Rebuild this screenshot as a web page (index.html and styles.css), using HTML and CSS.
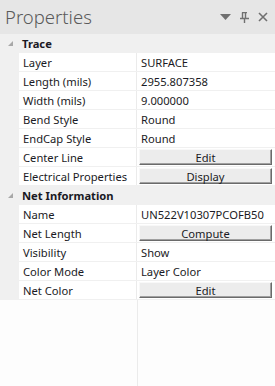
FILE: index.html
```html
<!DOCTYPE html>
<html lang="en">
<head>
    <meta charset="UTF-8">
    <meta name="viewport" content="width=device-width, initial-scale=1.0">
    <title>Properties</title>
    <link rel="stylesheet" href="styles.css">
</head>
<body>
    <div class="panel">
        <div class="titlebar">
            <span class="title">Properties</span>
            <div class="tools">
                <svg width="11" height="6" viewBox="0 0 11 6"><path d="M0 0 H11 L5.5 6 Z" fill="#707070"/></svg>
                <svg width="9" height="11" viewBox="0 0 9 11"><path d="M2 0.5 H7 M2.5 0.5 V6 M5.5 0.5 V6 M0 6.5 H9 M4.5 6.5 V11" stroke="#707070" stroke-width="1.4" fill="none"/></svg>
                <svg width="10" height="10" viewBox="0 0 10 10"><path d="M1 1 L9 9 M9 1 L1 9" stroke="#707070" stroke-width="1.6" fill="none"/></svg>
            </div>
        </div>

        <div class="grid">
            <div class="category"><span class="arrow"></span>Trace</div>
            <div class="row"><span class="name">Layer</span><span class="value">SURFACE</span></div>
            <div class="row"><span class="name">Length (mils)</span><span class="value">2955.807358</span></div>
            <div class="row"><span class="name">Width (mils)</span><span class="value">9.000000</span></div>
            <div class="row"><span class="name">Bend Style</span><span class="value">Round</span></div>
            <div class="row"><span class="name">EndCap Style</span><span class="value">Round</span></div>
            <div class="row"><span class="name">Center Line</span><span class="value"><button>Edit</button></span></div>
            <div class="row"><span class="name">Electrical Properties</span><span class="value"><button>Display</button></span></div>

            <div class="category"><span class="arrow"></span>Net Information</div>
            <div class="row"><span class="name">Name</span><span class="value">UN522V10307PCOFB50</span></div>
            <div class="row"><span class="name">Net Length</span><span class="value"><button>Compute</button></span></div>
            <div class="row"><span class="name">Visibility</span><span class="value">Show</span></div>
            <div class="row"><span class="name">Color Mode</span><span class="value">Layer Color</span></div>
            <div class="row"><span class="name">Net Color</span><span class="value"><button>Edit</button></span></div>
        </div>

        <div class="filler">
            <span class="fill-left"></span>
            <span class="fill-right"></span>
        </div>
    </div>
</body>
</html>
```

FILE: styles.css
```css
body {
    margin: 0;
    padding: 0;
    font-family: "Segoe UI", "Noto Sans", Arial, sans-serif;
    font-size: 11.2px;
    color: #1a1a24;
}

.panel {
    width: 275px;
    height: 386px;
    display: flex;
    flex-direction: column;
    background-color: #f0f0f0;
}

.titlebar {
    height: 34px;
    display: flex;
    align-items: center;
    justify-content: space-between;
    background-color: #e6e6e6;
    padding: 0 5px;
}

.title {
    font-size: 18.5px;
    font-weight: 300;
    color: #5a5a5a;
    margin-top: -1px;
}

.tools {
    display: flex;
    align-items: center;
    gap: 9px;
    padding-right: 2px;
}

.grid {
    display: flex;
    flex-direction: column;
}

.category {
    height: 19px;
    display: flex;
    align-items: center;
    font-weight: bold;
    background-color: #f0f0f0;
}

.arrow {
    width: 0;
    height: 0;
    margin: 0 9px 0 8px;
    border-left: 5px solid transparent;
    border-bottom: 5px solid #a8a8a8;
}

.row {
    height: 19px;
    display: flex;
    margin-left: 19px;
    background-color: #ffffff;
    border-bottom: 1px solid #f0f0f0;
    box-sizing: border-box;
}

.name {
    width: 118px;
    padding-left: 4px;
    box-sizing: border-box;
    border-right: 1px solid #ebebeb;
    display: flex;
    align-items: center;
}

.value {
    flex: 1;
    padding-left: 4px;
    display: flex;
    align-items: center;
}

.value button {
    margin-left: -2px;
    width: 133px;
    height: 16px;
    padding: 0;
    font: inherit;
    color: #1a1a24;
    background-color: #ececec;
    border: 1px solid;
    border-color: #f8f8f8 #6a6a6a #6a6a6a #f8f8f8;
    box-shadow: inset -1px -1px 0 #a0a0a0;
    line-height: 13px;
}

.filler {
    flex: 1;
    display: flex;
    background-color: #fdfdfd;
}

.fill-left {
    width: 137px;
    border-right: 1px solid #ebebeb;
}
```
